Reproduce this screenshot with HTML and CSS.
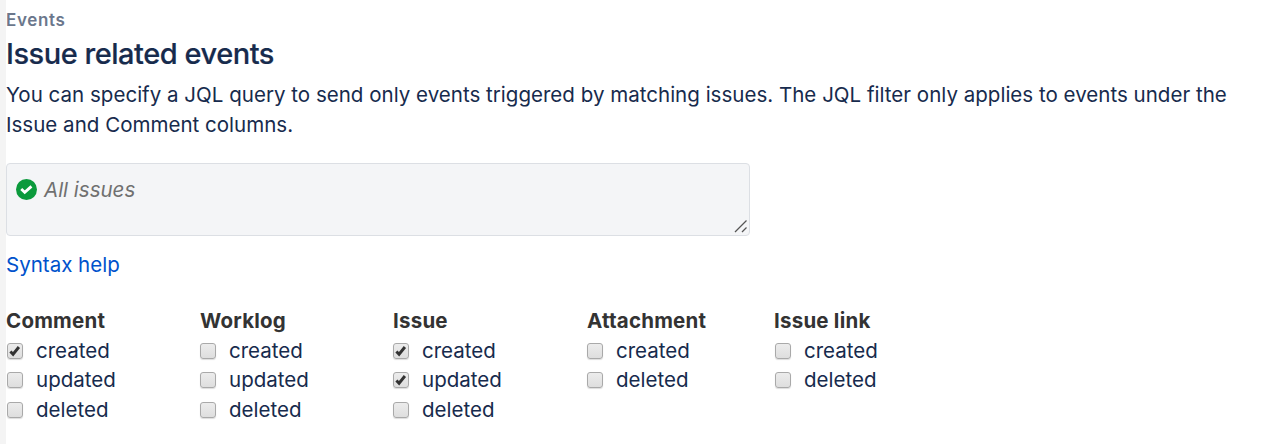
FILE: index.html
```html
<!DOCTYPE html>
<html lang="en"><head><meta charset="utf-8"><title>Events</title><link rel="stylesheet" href="styles.css"></head>
<body>
<svg class="defs" width="0" height="0"><symbol id="tick" viewBox="0 0 14 14"><path d="M2.4 7.4 5.1 10.2 10.9 3"/></symbol></svg>
<main class="panel">
<div class="eyebrow">Events</div>
<h1 class="title">Issue related events</h1>
<p class="intro">You can specify a JQL query to send only events triggered by matching issues. The JQL filter only applies to events under the<br>Issue and Comment columns.</p>
<div class="query">
<svg class="ok" viewBox="0 0 20 20"><circle cx="10" cy="10" r="10"/><path d="M5 9.6 8.3 12.7 14.7 7"/></svg>
<span class="placeholder">All issues</span>
<svg class="grip" viewBox="0 0 14 14"><path d="M1 13 12.5 1.5M8 13l4.5-4.5"/></svg>
</div>
<a class="help">Syntax help</a>
<div class="groups">
<section class="group"><h2>Comment</h2><label><i class="box"><svg class="tick"><use href="#tick"/></svg></i>created</label><label><i class="box"></i>updated</label><label><i class="box"></i>deleted</label></section>
<section class="group"><h2>Worklog</h2><label><i class="box"></i>created</label><label><i class="box"></i>updated</label><label><i class="box"></i>deleted</label></section>
<section class="group"><h2>Issue</h2><label><i class="box"><svg class="tick"><use href="#tick"/></svg></i>created</label><label><i class="box"><svg class="tick"><use href="#tick"/></svg></i>updated</label><label><i class="box"></i>deleted</label></section>
<section class="group"><h2>Attachment</h2><label><i class="box"></i>created</label><label><i class="box"></i>deleted</label></section>
<section class="group"><h2>Issue link</h2><label><i class="box"></i>created</label><label><i class="box"></i>deleted</label></section>
</div>
</main>
</body></html>
```
FILE: styles.css
```css
*{box-sizing:border-box}
body{margin:0;background:#fff;font-family:Inter,sans-serif;color:#172b4d;font-size:20.52px}
.defs{display:block}
.panel{height:444px;padding-top:8px;border-left:6px solid #f4f4f4;overflow:hidden}
.eyebrow{font-size:17px;line-height:25px;font-weight:600;letter-spacing:.65px;color:#6b778c}
.title{margin:3px 0 0;font-size:29px;line-height:36px;font-weight:500;letter-spacing:-.47px;-webkit-text-stroke:.2px #172b4d}
.intro{margin:8px 0 0;line-height:30px;letter-spacing:.014px;white-space:nowrap}
.query{display:flex;position:relative;margin-top:23px;width:744px;height:73px;padding:10px 9px;background:#f4f5f7;border:1px solid #dcdfe4;border-radius:4px}
.ok{width:21px;height:21px;margin-top:5px;fill:#0b9a3c}
.ok path{fill:none;stroke:#fff;stroke-width:2.7}
.placeholder{margin-left:7px;line-height:31px;font-style:italic;color:#707070}
.grip{position:absolute;right:1px;bottom:2px;width:14px;height:14px;fill:none;stroke:#555;stroke-width:1.3}
.help{display:block;margin-top:14px;line-height:30px;color:#0052cc}
.groups{display:grid;grid-template-columns:194px 193px 194px 187px 200px;margin-top:26px}
.group h2{margin:0;font-size:20.5px;line-height:30px;font-weight:700;letter-spacing:.22px;color:#333}
.group label{display:flex;align-items:center;height:30px;line-height:28px;padding-bottom:1px}
.group label:nth-of-type(n+2){padding-bottom:2px}
.box{display:block;width:16px;height:16px;margin:0 13px 0 1px;border:1px solid #a9a9a9;border-radius:3px;background:linear-gradient(#ececec,#dedede);box-shadow:0 1px 1px #ddd}
.group:nth-child(n+2) .box{margin-left:0}
.group:nth-child(5) .box{margin-left:1px}
.tick{display:block;width:14px;height:14px;fill:none;stroke:#333;stroke-width:2.9}
```
